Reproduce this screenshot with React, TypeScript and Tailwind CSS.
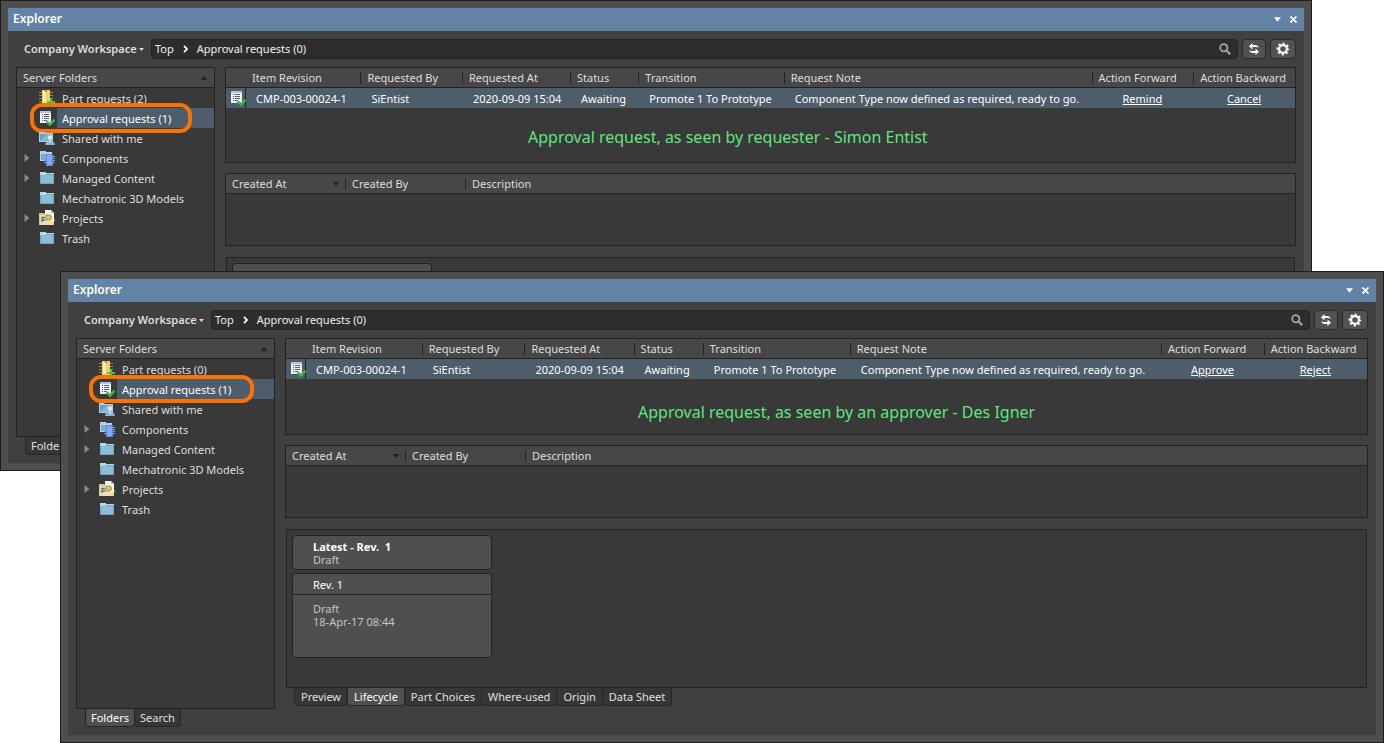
import { useState } from "react";
import type { ReactNode } from "react";
import { clsx } from "clsx";

type IconProps = { className?: string };

function PartRequestIcon() {
  return (
    <svg viewBox="0 0 16 16" className="h-4 w-4" shapeRendering="crispEdges">
      <path
        d="M0 2.5h3M0 5.5h3M0 8.5h3M0 11.5h3M11 2.5h3M11 5.5h3M11 8.5h3"
        stroke="#9b8a55"
      />
      <rect x="3" y="0" width="8" height="14" fill="#f3cf6b" />
      <rect x="4" y="1" width="3" height="12" fill="#fbe9ae" />
      <rect x="6" y="0" width="2" height="2" fill="#b58e35" />
      <path d="M12 8v8M8 12h8" stroke="#45c93c" strokeWidth="2" />
    </svg>
  );
}

function ApprovalIcon() {
  return (
    <svg viewBox="0 0 16 16" className="h-4 w-4">
      <rect x="1" y="1" width="11" height="12" fill="#f2f4fa" />
      <rect x="1" y="1" width="11" height="2" fill="#b9bfd4" />
      <path
        d="M3 4.5h1M5 4.5h5M3 6.5h1M5 6.5h5M3 8.5h1M5 8.5h5M3 10.5h1M5 10.5h3"
        stroke="#53608a"
        shapeRendering="crispEdges"
      />
      <path d="M7.500 11.500l3.500 3 4.500-5" stroke="#3cb83c" strokeWidth="2.600" fill="none" />
    </svg>
  );
}

function SharedIcon() {
  return (
    <svg viewBox="0 0 16 16" className="h-4 w-4">
      <path d="M0 2h5l1 1h8v9H0z" fill="#a9cfe2" />
      <path d="M1 4h12v7H1z" fill="#6d9fbf" />
      <path d="M1 11l7-7h5v7z" fill="#84b4cf" />
      <circle cx="11" cy="7.500" r="2.200" fill="#dbeaf7" />
      <path d="M6 15c.5-3 2.500-4.500 5-4.500s4.500 1.500 5 4.500z" fill="#8db4dd" />
      <path d="M10 10.500h2l-1 3z" fill="#f4f8fc" />
    </svg>
  );
}

function ComponentsIcon() {
  return (
    <svg viewBox="0 0 16 16" className="h-4 w-4" shapeRendering="crispEdges">
      <path d="M1 1h5l1 1h6v9H1z" fill="#b5d3e8" />
      <path d="M2 4h10v6H2z" fill="#7fa9c8" />
      <path
        d="M5 6.500h3M5 8.500h3M5 10.500h3M5 12.500h3M13 6.500h3M13 8.500h3M13 10.500h3M13 12.500h3"
        stroke="#8ba6dc"
      />
      <rect x="7" y="4" width="7" height="12" fill="#5f86dd" />
      <rect x="8" y="5" width="5" height="10" fill="#86a9f3" />
    </svg>
  );
}

function FolderIcon() {
  return (
    <svg viewBox="0 0 16 16" className="h-4 w-4" shapeRendering="crispEdges">
      <path d="M1 2h5l1 1h8v11H1z" fill="#6fa3be" />
      <path d="M1 2h5l1 1h8v1H7L6 5H1z" fill="#b5d9e8" />
      <rect x="2" y="5" width="12" height="8" fill="#8cbdd6" />
    </svg>
  );
}

function ProjectsIcon() {
  return (
    <svg viewBox="0 0 16 16" className="h-4 w-4">
      <path d="M0 3h5l1 1h9v11H0z" fill="#e3c27c" />
      <path d="M6 0h6l3 3v8H6z" fill="#f4f3ee" />
      <path d="M12 0v3h3z" fill="#b9b6aa" />
      <path d="M1 5h5l1 6h6l3-2-2 6H1z" fill="#f3dfa6" />
      <path d="M7 5h3a2.500 2.500 0 010 5H7z" fill="#e9c352" stroke="#8d7c45" strokeWidth=".8" />
      <path d="M3 12V7.500h3M3 10h3" stroke="#3f6fb0" strokeWidth="1.300" fill="none" />
    </svg>
  );
}

function Triangle({ className }: IconProps) {
  return (
    <svg viewBox="0 0 8 5" className={clsx("shrink-0", className)} fill="currentColor">
      <path d="M0 0h8L4 5z" />
    </svg>
  );
}

function SearchIcon() {
  return (
    <svg viewBox="0 0 12 12" className="h-3 w-3" fill="none" stroke="#a3a3a3">
      <circle cx="4.800" cy="4.800" r="3.600" strokeWidth="1.800" />
      <path d="M7.500 7.500l3.800 3.800" strokeWidth="2.200" />
    </svg>
  );
}

function RefreshIcon() {
  return (
    <svg viewBox="0 0 12 12" className="h-3 w-3" fill="#fff">
      <path d="M1 3.200L4.500 0v2h2.500c2 0 3.300 1 3.800 3-1-.8-2-1-3.300-1h-3v2.400z" />
      <path d="M11 8.800L7.500 12v-2H5C3 10 1.700 9 1.200 7c1 .8 2 1 3.300 1h3V5.600z" />
    </svg>
  );
}

function GearIcon() {
  return (
    <svg viewBox="0 0 14 14" className="h-3.5 w-3.5" fill="none" stroke="#fff">
      <circle cx="7" cy="7" r="3.900" strokeWidth="2.200" />
      <circle cx="7" cy="7" r="5.500" strokeWidth="1.800" strokeDasharray="2.200 2.120" strokeDashoffset="1.100" />
    </svg>
  );
}

const folders = [
  { name: "Part requests", icon: PartRequestIcon },
  { name: "Approval requests (1)", icon: ApprovalIcon, selected: true },
  { name: "Shared with me", icon: SharedIcon },
  { name: "Components", icon: ComponentsIcon, expandable: true },
  { name: "Managed Content", icon: FolderIcon, expandable: true },
  { name: "Mechatronic 3D Models", icon: FolderIcon },
  { name: "Projects", icon: ProjectsIcon, expandable: true },
  { name: "Trash", icon: FolderIcon },
];

const requestColumns = [
  { label: "Item Revision", width: "w-[10.8%]" },
  { label: "Requested By", width: "w-[9.5%]" },
  { label: "Requested At", width: "w-[10.1%]" },
  { label: "Status", width: "w-[6.4%]" },
  { label: "Transition", width: "w-[13.6%]" },
  { label: "Request Note", width: "w-[28.8%]" },
  { label: "Action Forward", width: "w-[9.5%]" },
  { label: "Action Backward", width: "" },
];

const requestValues = [
  "CMP-003-00024-1",
  "SiEntist",
  "2020-09-09 15:04",
  "Awaiting",
  "Promote 1 To Prototype",
  "Component Type now defined as required, ready to go.",
];

const detailTabs = [
  "Preview",
  "Lifecycle",
  "Part Choices",
  "Where-used",
  "Origin",
  "Data Sheet",
];

function HeaderLabel({ first, children }: { first?: boolean; children: ReactNode }) {
  return (
    <span
      className={clsx(
        "flex h-3 items-center border-l pl-1.5",
        first ? "border-transparent" : "border-[#222]"
      )}
    >
      {children}
    </span>
  );
}

type TabsProps = { tabs: string[]; initial: string; label: string; compact?: boolean };

function Tabs({ tabs, initial, label, compact }: TabsProps) {
  const [active, setActive] = useState(initial);

  return (
    <div role="tablist" aria-label={label} className="flex pl-2.5">
      {tabs.map((tab) => (
        <button
          key={tab}
          role="tab"
          aria-selected={active === tab}
          onClick={() => setActive(tab)}
          className={clsx(
            "-ml-px h-[18px] rounded-b border border-t-0 border-[#262626] whitespace-nowrap",
            compact ? "px-[5px]" : "px-1.5",
            active === tab ? "bg-[#505050] text-white" : "bg-[#363636] text-[#e0e0e0]"
          )}
        >
          {tab}
        </button>
      ))}
    </div>
  );
}

function FolderTree({ partRequests, ring }: { partRequests: number; ring: string }) {
  return (
    <div className="flex-1 border border-[#222] bg-[#393939]">
      <div className="flex h-5 items-center justify-between border-b border-[#222] bg-[#474747] px-1.5">
        Server Folders
        <Triangle className="h-1 w-2 rotate-180 text-[#222]" />
      </div>
      <ul>
        {folders.map(({ name, icon: Icon, selected, expandable }) => (
          <li key={name} className="relative flex h-5 items-center">
            <span className="flex w-5 justify-center">
              {expandable && <Triangle className="h-1.5 w-2 -rotate-90 text-[#8a8a8a]" />}
            </span>
            <span className="flex w-5 justify-center">
              <Icon />
            </span>
            <a
              href="#folder"
              className={clsx(
                "flex h-full flex-1 items-center pt-0.5 pl-[5px] whitespace-nowrap",
                selected && "bg-[#4d5d6b] text-white"
              )}
            >
              {name === "Part requests" ? `${name} (${partRequests})` : name}
            </a>
            {selected && (
              <span
                className={clsx("absolute rounded-xl border-4 border-[#f77207]", ring)}
              />
            )}
          </li>
        ))}
      </ul>
    </div>
  );
}

function RequestsTable({ forward, backward }: { forward: string; backward: string }) {
  return (
    <table className="w-full table-fixed border-separate border-spacing-0 text-left whitespace-nowrap">
      <thead>
        <tr className="h-5 bg-[#474747]">
          <th className="w-[19px] border-b border-[#222] p-0" aria-label="Type" />
          {requestColumns.map((column, i) => (
            <th
              key={column.label}
              className={clsx("border-b border-[#222] p-0 font-normal", column.width)}
            >
              <HeaderLabel first={i === 0}>{column.label}</HeaderLabel>
            </th>
          ))}
        </tr>
      </thead>
      <tbody>
        <tr className="h-5 bg-[#4d5d6a] text-white">
          <td className="p-0 pl-1">
            <ApprovalIcon />
          </td>
          {requestValues.map((value, i) => (
            <td
              key={value}
              className={clsx(
                "p-0 pt-0.5",
                i === 0 ? "border-l border-[#222] pl-2.5" : "pl-[11px]"
              )}
            >
              {value}
            </td>
          ))}
          <td className="p-0 pt-0.5 text-center">
            <a href="#forward" className="underline">{forward}</a>
          </td>
          <td className="p-0 pt-0.5 text-center">
            <a href="#backward" className="underline">{backward}</a>
          </td>
        </tr>
      </tbody>
    </table>
  );
}

function HistoryTable() {
  return (
    <table className="w-full table-fixed border-separate border-spacing-0 text-left">
      <thead>
        <tr className="h-5 bg-[#474747]">
          <th className="w-[119px] border-b border-[#222] p-0 font-normal">
            <span className="flex h-3 items-center justify-between pr-[5px] pl-1.5">
              Created At
              <Triangle className="h-1 w-2 text-[#222]" />
            </span>
          </th>
          <th className="w-[120px] border-b border-[#222] p-0 font-normal">
            <HeaderLabel>Created By</HeaderLabel>
          </th>
          <th className="border-b border-[#222] p-0 font-normal">
            <HeaderLabel>Description</HeaderLabel>
          </th>
        </tr>
      </thead>
    </table>
  );
}

function Lifecycle({ revision }: { revision?: string }) {
  return (
    <div className="mx-px min-h-0 flex-1 overflow-hidden border border-[#222] bg-[#393939] p-[5px] leading-[13px] text-[#c4c4c4]">
      <div className="min-h-[35px] w-[200px] rounded border border-[#222] bg-[#4f4f4f] pt-1 pb-[3px] pl-5">
        {revision && (
          <>
            <p className="font-bold whitespace-pre text-white">{`Latest - Rev.  ${revision}`}</p>
            <p>Draft</p>
          </>
        )}
      </div>
      {revision && (
        <div className="mt-[3px] h-[85px] w-[200px] rounded border border-[#222] bg-[#4f4f4f]">
          <p className="border-b border-[#222] pt-1 pb-[3px] pl-5 text-white">Rev. {revision}</p>
          <p className="pt-[7px] pl-5">Draft</p>
          <p className="pl-5">18-Apr-17 08:44</p>
        </div>
      )}
    </div>
  );
}

type ExplorerProps = {
  className: string;
  partRequests: number;
  forward: string;
  backward: string;
  note: string;
  noteClass: string;
  ring: string;
  sideTab: string;
  revision?: string;
};

function ExplorerWindow(props: ExplorerProps) {
  return (
    <section
      className={clsx(
        "flex flex-col border border-[#1c1c1c] bg-[#4e4e4e] p-[7px] text-[11px] leading-4 text-[#dedede]",
        props.className
      )}
    >
      {/* Title bar */}
      <header className="flex h-[23px] shrink-0 items-center bg-[#6283a5] pr-[7px] pl-[5px] text-white">
        <h1 className="flex-1 pb-0.5 text-xs font-semibold">Explorer</h1>
        <button aria-label="Window menu" className="mr-[9px]">
          <Triangle className="h-[5px] w-[7px]" />
        </button>
        <button aria-label="Close">
          <svg viewBox="0 0 7 7" className="h-[7px] w-[7px]" stroke="#fff" strokeWidth="1.800">
            <path d="M.5 .5l6 6M6.500 .5l-6 6" />
          </svg>
        </button>
      </header>

      <div className="flex min-h-0 flex-1 flex-col gap-2 bg-[#404040] p-2">
        {/* Toolbar */}
        <div className="flex h-5 shrink-0 gap-1">
          <button className="flex w-[131px] items-center gap-0.5 pl-2 font-semibold whitespace-nowrap">
            Company Workspace
            <Triangle className="h-[3px] w-[5px]" />
          </button>
          <nav
            aria-label="Path"
            className="flex flex-1 items-center rounded border border-[#222] bg-[#2d2d2d] pr-1.5 pl-[3px] text-[#eee]"
          >
            <a href="#top">Top</a>
            <svg viewBox="0 0 5 8" className="mx-[9px] h-2 w-[5px]" fill="none" stroke="#fff" strokeWidth="1.8">
              <path d="M1 .8L4 4 1 7.200" />
            </svg>
            <a href="#approvals" className="flex-1">Approval requests (0)</a>
            <button aria-label="Search">
              <SearchIcon />
            </button>
          </nav>
          <button
            aria-label="Refresh"
            className="flex w-6 items-center justify-center rounded border border-[#2a2a2a] bg-[#525252]"
          >
            <RefreshIcon />
          </button>
          <button
            aria-label="Settings"
            className="flex w-[26px] items-center justify-center rounded border border-[#2a2a2a] bg-[#525252]"
          >
            <GearIcon />
          </button>
        </div>

        <div className="flex min-h-0 flex-1 gap-2.5">
          <aside className="flex w-[199px] shrink-0 flex-col">
            <FolderTree partRequests={props.partRequests} ring={props.ring} />
            <Tabs tabs={["Folders", "Search"]} initial={props.sideTab} label="Side panel" compact />
          </aside>

          <main className="flex min-w-0 flex-1 flex-col pb-[21px]">
            <div className="mb-2.5 shrink-0 border border-[#222] bg-[#393939]">
              <RequestsTable forward={props.forward} backward={props.backward} />
              <p className={clsx("text-base leading-6 whitespace-nowrap text-[#5ee67e]", props.noteClass)}>
                {props.note}
              </p>
            </div>
            <div className="mb-[11px] h-[73px] shrink-0 border border-[#222] bg-[#393939]">
              <HistoryTable />
            </div>
            <Lifecycle revision={props.revision} />
            <Tabs tabs={detailTabs} initial="Lifecycle" label="Item details" />
          </main>
        </div>
      </div>
    </section>
  );
}

export default function App() {
  return (
    <div className="relative h-screen min-h-[700px] overflow-hidden bg-white font-['Noto_Sans','Open_Sans',sans-serif]">
      <ExplorerWindow
        className="absolute top-0 right-[72px] bottom-[272px] left-0"
        partRequests={2}
        forward="Remind"
        backward="Cancel"
        note="Approval request, as seen by requester - Simon Entist"
        noteClass="pt-[17px] pb-[13px] pl-[302px]"
        ring="-top-[5px] left-[13px] h-[30px] w-[162px]"
        sideTab="Search"
      />
      <ExplorerWindow
        className="absolute top-[271px] right-0 bottom-0 left-[60px]"
        partRequests={0}
        forward="Approve"
        backward="Reject"
        note="Approval request, as seen by an approver - Des Igner"
        noteClass="pt-[21px] pb-2.5 pl-[352px]"
        ring="-top-1 left-3 h-7 w-[165px]"
        sideTab="Folders"
        revision="1"
      />
    </div>
  );
}
